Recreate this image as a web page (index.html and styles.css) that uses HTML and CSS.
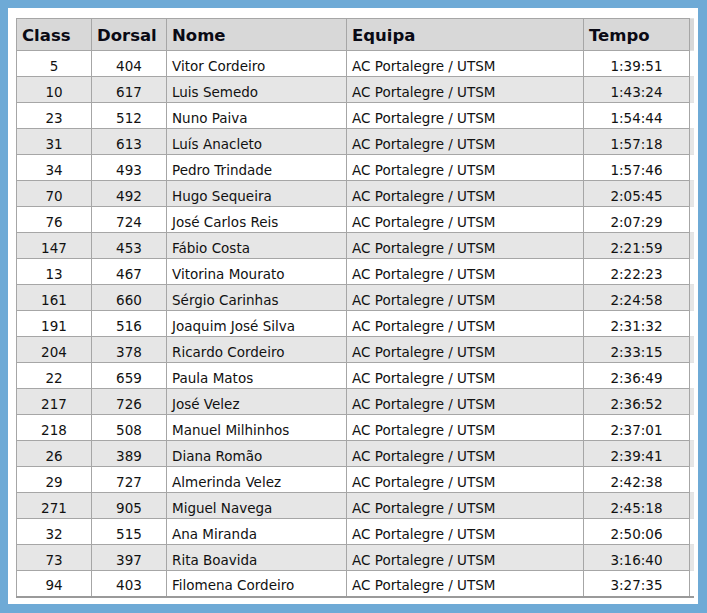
FILE: index.html
```html
<!DOCTYPE html>
<html lang="pt">
<head>
<meta charset="utf-8">
<title>Classificação</title>
<link rel="stylesheet" href="styles.css">
</head>
<body>
<div class="panel">
  <div class="clip">
    <table class="results">
      <colgroup>
        <col class="c-class"><col class="c-dorsal"><col class="c-nome"><col class="c-equipa"><col class="c-tempo"><col class="c-extra">
      </colgroup>
      <thead>
        <tr><th>Class</th><th>Dorsal</th><th>Nome</th><th>Equipa</th><th>Tempo</th><th></th></tr>
      </thead>
      <tbody>
        <tr><td class="num">5</td><td class="num">404</td><td>Vitor Cordeiro</td><td>AC Portalegre / UTSM</td><td class="num">1:39:51</td><td></td></tr>
        <tr><td class="num">10</td><td class="num">617</td><td>Luis Semedo</td><td>AC Portalegre / UTSM</td><td class="num">1:43:24</td><td></td></tr>
        <tr><td class="num">23</td><td class="num">512</td><td>Nuno Paiva</td><td>AC Portalegre / UTSM</td><td class="num">1:54:44</td><td></td></tr>
        <tr><td class="num">31</td><td class="num">613</td><td>Luís Anacleto</td><td>AC Portalegre / UTSM</td><td class="num">1:57:18</td><td></td></tr>
        <tr><td class="num">34</td><td class="num">493</td><td>Pedro Trindade</td><td>AC Portalegre / UTSM</td><td class="num">1:57:46</td><td></td></tr>
        <tr><td class="num">70</td><td class="num">492</td><td>Hugo Sequeira</td><td>AC Portalegre / UTSM</td><td class="num">2:05:45</td><td></td></tr>
        <tr><td class="num">76</td><td class="num">724</td><td>José Carlos Reis</td><td>AC Portalegre / UTSM</td><td class="num">2:07:29</td><td></td></tr>
        <tr><td class="num">147</td><td class="num">453</td><td>Fábio Costa</td><td>AC Portalegre / UTSM</td><td class="num">2:21:59</td><td></td></tr>
        <tr><td class="num">13</td><td class="num">467</td><td>Vitorina Mourato</td><td>AC Portalegre / UTSM</td><td class="num">2:22:23</td><td></td></tr>
        <tr><td class="num">161</td><td class="num">660</td><td>Sérgio Carinhas</td><td>AC Portalegre / UTSM</td><td class="num">2:24:58</td><td></td></tr>
        <tr><td class="num">191</td><td class="num">516</td><td>Joaquim José Silva</td><td>AC Portalegre / UTSM</td><td class="num">2:31:32</td><td></td></tr>
        <tr><td class="num">204</td><td class="num">378</td><td>Ricardo Cordeiro</td><td>AC Portalegre / UTSM</td><td class="num">2:33:15</td><td></td></tr>
        <tr><td class="num">22</td><td class="num">659</td><td>Paula Matos</td><td>AC Portalegre / UTSM</td><td class="num">2:36:49</td><td></td></tr>
        <tr><td class="num">217</td><td class="num">726</td><td>José Velez</td><td>AC Portalegre / UTSM</td><td class="num">2:36:52</td><td></td></tr>
        <tr><td class="num">218</td><td class="num">508</td><td>Manuel Milhinhos</td><td>AC Portalegre / UTSM</td><td class="num">2:37:01</td><td></td></tr>
        <tr><td class="num">26</td><td class="num">389</td><td>Diana Romão</td><td>AC Portalegre / UTSM</td><td class="num">2:39:41</td><td></td></tr>
        <tr><td class="num">29</td><td class="num">727</td><td>Almerinda Velez</td><td>AC Portalegre / UTSM</td><td class="num">2:42:38</td><td></td></tr>
        <tr><td class="num">271</td><td class="num">905</td><td>Miguel Navega</td><td>AC Portalegre / UTSM</td><td class="num">2:45:18</td><td></td></tr>
        <tr><td class="num">32</td><td class="num">515</td><td>Ana Miranda</td><td>AC Portalegre / UTSM</td><td class="num">2:50:06</td><td></td></tr>
        <tr><td class="num">73</td><td class="num">397</td><td>Rita Boavida</td><td>AC Portalegre / UTSM</td><td class="num">3:16:40</td><td></td></tr>
        <tr><td class="num">94</td><td class="num">403</td><td>Filomena Cordeiro</td><td>AC Portalegre / UTSM</td><td class="num">3:27:35</td><td></td></tr>
      </tbody>
    </table>
  </div>
</div>
</body>
</html>
```

FILE: styles.css
```css
html, body {
  margin: 0;
  padding: 0;
}
body {
  background: #6eaad6;
  width: 707px;
  height: 613px;
  overflow: hidden;
  font-family: "DejaVu Sans", Verdana, sans-serif;
}
.panel {
  margin: 8px 0 0 8px;
  width: 690px;
  height: 596px;
  background: #ffffff;
  box-sizing: border-box;
  padding: 10px 0 0 8px;
}
.clip {
  width: 678px;
  overflow: hidden;
}
.results {
  border-collapse: collapse;
  table-layout: fixed;
  width: 698px;
  color: #111;
}
.c-class { width: 75px; }
.c-dorsal { width: 75px; }
.c-nome { width: 180px; }
.c-equipa { width: 237px; }
.c-tempo { width: 106px; }
.c-extra { width: 25px; }
.results th {
  background: #d8d8d8;
  height: 30px;
  padding: 1px 0 0 5px;
  box-sizing: border-box;
  text-align: left;
  font-size: 16.5px;
  font-weight: bold;
  border: 1px solid #a6a6a6;
  color: #0a0a14;
  white-space: nowrap;
}
.results thead tr {
  height: 32px;
}
.results tbody tr {
  height: 26px;
}
.results td {
  padding: 4px 0 0 5px;
  line-height: 20px;
  font-size: 13.5px;
  border: 1px solid #a6a6a6;
  white-space: nowrap;
  overflow: hidden;
}
.results td.num {
  text-align: center;
  padding-left: 0;
}
.results tbody tr:nth-child(even) td {
  background: #e6e6e6;
}
.results tbody tr:last-child td {
  border-bottom: 2px solid #9a9a9a;
}
.results th:last-child,
.results td:last-child {
  border-color: #e2e2e2;
  border-left-color: #a6a6a6;
}
```
